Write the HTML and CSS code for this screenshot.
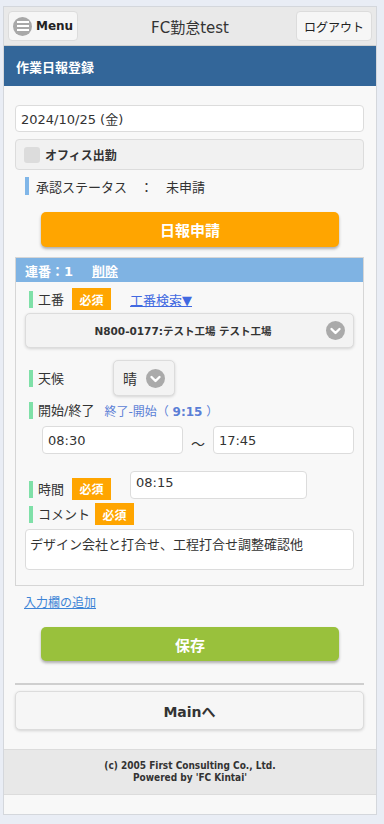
FILE: index.html
```html
<!DOCTYPE html>
<html lang="ja">
<head>
    <meta charset="UTF-8">
    <meta name="viewport" content="width=device-width, initial-scale=1.0">
    <title>作業日報登録</title>
    <link rel="stylesheet" href="styles.css">
</head>
<body>
    <div class="page">
        <div class="header">
            <a class="hdr-btn menu-btn" href="#">
                <span class="menu-icon"><i></i><i></i><i></i></span>Menu
            </a>
            <h1>FC勤怠test</h1>
            <a class="hdr-btn logout-btn" href="#">ログアウト</a>
        </div>

        <div class="title-bar">作業日報登録</div>

        <div class="content">
            <div class="date-input">2024/10/25 (金)</div>

            <label class="office-row">
                <span class="check"></span>オフィス出勤
            </label>

            <div class="status">承認ステータス　：　未申請</div>

            <button class="big-btn orange">日報申請</button>

            <div class="section">
                <div class="section-head">連番：1<a href="#">削除</a></div>

                <div class="row row-kouban">
                    <span class="field-label">工番</span>
                    <span class="badge">必須</span>
                    <a class="search-link" href="#">工番検索▼</a>
                </div>
                <div class="select wide">
                    <span class="select-text">N800-0177:テスト工場 テスト工場</span>
                    <span class="arrow"><svg width="19" height="19" viewBox="0 0 19 19"><circle cx="9.5" cy="9.5" r="9.5" fill="#aaa"/><path d="M5.5 8l4 4 4-4" fill="none" stroke="#fff" stroke-width="2.4" stroke-linecap="round" stroke-linejoin="round"/></svg></span>
                </div>

                <div class="row row-weather">
                    <span class="field-label">天候</span>
                    <div class="select small">
                        <span class="weather-text">晴</span>
                        <span class="arrow"><svg width="19" height="19" viewBox="0 0 19 19"><circle cx="9.5" cy="9.5" r="9.5" fill="#aaa"/><path d="M5.5 8l4 4 4-4" fill="none" stroke="#fff" stroke-width="2.4" stroke-linecap="round" stroke-linejoin="round"/></svg></span>
                    </div>
                </div>

                <div class="row row-time">
                    <span class="field-label">開始/終了</span>
                    <span class="diff">終了-開始（ <b>9:15</b> ）</span>
                </div>
                <div class="times">
                    <div class="text-input">08:30</div>
                    <span class="tilde">～</span>
                    <div class="text-input">17:45</div>
                </div>

                <div class="row row-hours">
                    <span class="field-label">時間</span>
                    <span class="badge">必須</span>
                    <div class="text-input hours">08:15</div>
                </div>

                <div class="row row-comment">
                    <span class="field-label">コメント</span>
                    <span class="badge">必須</span>
                </div>
                <div class="textarea">デザイン会社と打合せ、工程打合せ調整確認他</div>
            </div>

            <a class="add-link" href="#">入力欄の追加</a>

            <button class="big-btn green">保存</button>

            <hr class="divider">

            <button class="main-btn">Mainへ</button>
        </div>

        <div class="footer">
            (c) 2005 First Consulting Co., Ltd.<br>
            Powered by 'FC Kintai'
        </div>
        <div class="bottom"></div>
    </div>
</body>
</html>
```

FILE: styles.css
```css
body {
    margin: 0;
    background-color: #e9edf5;
    font-family: "DejaVu Sans", "Noto Sans CJK JP", sans-serif;
    color: #333;
}
.page {
    width: 372px;
    margin: 6px 7px 7px 3px;
    border: 1px solid #d4d7dc;
    background-color: #f8f8f8;
}

/* header */
.header {
    height: 38px;
    background-color: #e9e9e9;
    border-bottom: 1px solid #d0d0d0;
    display: flex;
    align-items: center;
    justify-content: space-between;
    padding: 0 4px;
    position: relative;
}
.header h1 {
    position: absolute;
    left: 0;
    right: 0;
    margin: 0;
    text-align: center;
    font-size: 15px;
    font-weight: normal;
    color: #333;
    pointer-events: none;
}
.hdr-btn {
    display: flex;
    align-items: center;
    background-color: #f6f6f6;
    border: 1px solid #dcdcdc;
    border-radius: 4px;
    text-decoration: none;
    color: #222;
    position: relative;
    z-index: 1;
}
.menu-btn { width: 70px; padding-left: 4px; box-sizing: border-box; height: 30px; font-size: 12px; font-weight: bold; }
.logout-btn { width: 76px; height: 30px; box-sizing: border-box; justify-content: center; font-size: 12px; }
.menu-icon {
    width: 19px;
    height: 19px;
    border-radius: 50%;
    background-color: #a8a8a8;
    display: flex;
    flex-direction: column;
    justify-content: center;
    align-items: center;
    gap: 2px;
    margin-right: 4px;
}
.menu-icon i { display: block; width: 12px; height: 2px; background-color: #fff; }

.title-bar {
    height: 40px;
    background-color: #336699;
    color: #fff;
    font-size: 13px;
    font-weight: bold;
    display: flex;
    align-items: center;
    padding-left: 12px;
}

/* content */
.content { padding: 19px 12px 19px 11px; }
.date-input {
    height: 25px;
    background-color: #fff;
    border: 1px solid #dcdcdc;
    border-radius: 4px;
    font-size: 13px;
    display: flex;
    align-items: center;
    padding-left: 5px;
}
.office-row {
    margin-top: 7px;
    height: 29px;
    background-color: #f1f1f1;
    border: 1px solid #dcdcdc;
    border-radius: 4px;
    display: flex;
    align-items: center;
    font-size: 12px;
    font-weight: bold;
    padding-left: 8px;
}
.check {
    width: 16px;
    height: 16px;
    background-color: #dcdcdc;
    border-radius: 3px;
    margin-right: 5px;
}
.status {
    margin: 7px 0 0 10px;
    height: 18px;
    border-left: 4px solid #80b6e8;
    padding-left: 7px;
    font-size: 13px;
    display: flex;
    align-items: center;
}
.big-btn {
    display: block;
    width: 298px;
    height: 35px;
    margin: 17px 0 0 26px;
    border: none;
    border-radius: 5px;
    color: #fff;
    font-family: inherit;
    font-size: 15px;
    font-weight: bold;
    box-shadow: 0 2px 3px rgba(0,0,0,0.3);
}
.orange { background-color: #ffa500; }
.green { background-color: #99c13c; margin-top: 17px; height: 34px; }

/* section */
.section {
    margin-top: 10px;
    border: 1px solid #d6d6d6;
    padding: 0 9px 15px 9px;
}
.section-head {
    margin: 0 -9px;
    height: 24px;
    background-color: #7fb3e3;
    color: #fff;
    font-size: 13px;
    font-weight: bold;
    display: flex;
    align-items: center;
    padding-left: 9px;
}
.section-head a { color: #fff; margin-left: 19px; }
.row { display: flex; align-items: center; margin-left: 4px; }
.field-label {
    border-left: 4px solid #7fe0a8;
    padding-left: 5px;
    font-size: 13px;
    line-height: 17px;
}
.badge {
    background-color: #ffa500;
    color: #fff;
    font-size: 12px;
    font-weight: bold;
    height: 22px;
    width: 39px;
    display: flex;
    align-items: center;
    justify-content: center;
}
.row-kouban { margin-top: 6px; height: 22px; }
.row-kouban .badge { margin-left: 8px; }
.search-link { margin-left: 19px; font-size: 13px; color: #4169e1; }
.select {
    background-color: #f3f3f3;
    border: 1px solid #dcdcdc;
    border-radius: 5px;
    box-shadow: 0 1px 3px rgba(0,0,0,0.15);
    display: flex;
    align-items: center;
}
.select.wide { margin-top: 3px; height: 33px; padding: 0 8px 0 0; }
.select-text { flex: 1; text-align: center; font-size: 10.5px; font-weight: bold; padding-left: 14px; }
.arrow { display: flex; }
.row-weather { margin-top: 12px; }
.row-weather .field-label { margin-top: 1px; }
.select.small { margin-left: 49px; width: 60px; height: 34px; justify-content: center; gap: 9px; }
.weather-text { font-size: 14px; }
.row-time { margin-top: 6px; height: 17px; }
.diff { margin-left: 10px; font-size: 12px; color: #5b7fd6; }
.times { display: flex; align-items: center; margin: 7px 0 0 17px; }
.text-input {
    height: 26px;
    background-color: #fff;
    border: 1px solid #dcdcdc;
    border-radius: 4px;
    font-size: 13px;
    padding-left: 5px;
    display: flex;
    align-items: center;
    box-sizing: content-box;
}
.times .text-input { width: 135px; }
.tilde { width: 30px; text-align: center; font-size: 14px; padding-top: 6px; }
.row-hours { margin-top: 17px; height: 28px; }
.row-hours .field-label { margin-top: 9px; }
.row-hours .badge { margin-left: 8px; margin-top: 7px; }
.text-input.hours { margin-left: 19px; width: 170px; align-items: flex-start; padding-top: 3px; height: 23px; }
.row-comment { margin-top: 4px; }
.row-comment .badge { margin-left: 5px; }
.textarea {
    margin-top: 4px;
    background-color: #fff;
    border: 1px solid #dcdcdc;
    border-radius: 4px;
    font-size: 13px;
    padding: 4px 4px 0 4px;
    box-sizing: border-box;
    height: 41px;
}

.add-link {
    display: block;
    margin: 10px 0 0 9px;
    font-size: 12px;
    color: #3d84d6;
    line-height: 14px;
}
.divider {
    margin: 22px 0 0 0;
    border: none;
    border-top: 2px solid #cfcfcf;
}
.main-btn {
    display: block;
    width: 100%;
    margin-top: 6px;
    height: 39px;
    background-color: #f6f6f6;
    border: 1px solid #dcdcdc;
    border-radius: 5px;
    box-shadow: 0 1px 3px rgba(0,0,0,0.15);
    font-family: inherit;
    font-size: 14px;
    font-weight: bold;
    color: #333;
}

.footer {
    background-color: #e8e8e8;
    border-top: 1px solid #dcdcdc;
    border-bottom: 1px solid #dcdcdc;
    height: 44px;
    display: flex;
    flex-direction: column;
    justify-content: center;
    align-items: center;
    text-align: center;
    font-family: "DejaVu Sans Condensed", "DejaVu Sans", sans-serif;
    font-size: 10px;
    font-weight: bold;
    line-height: 12px;
    color: #333;
}
.bottom { height: 19px; }
```
